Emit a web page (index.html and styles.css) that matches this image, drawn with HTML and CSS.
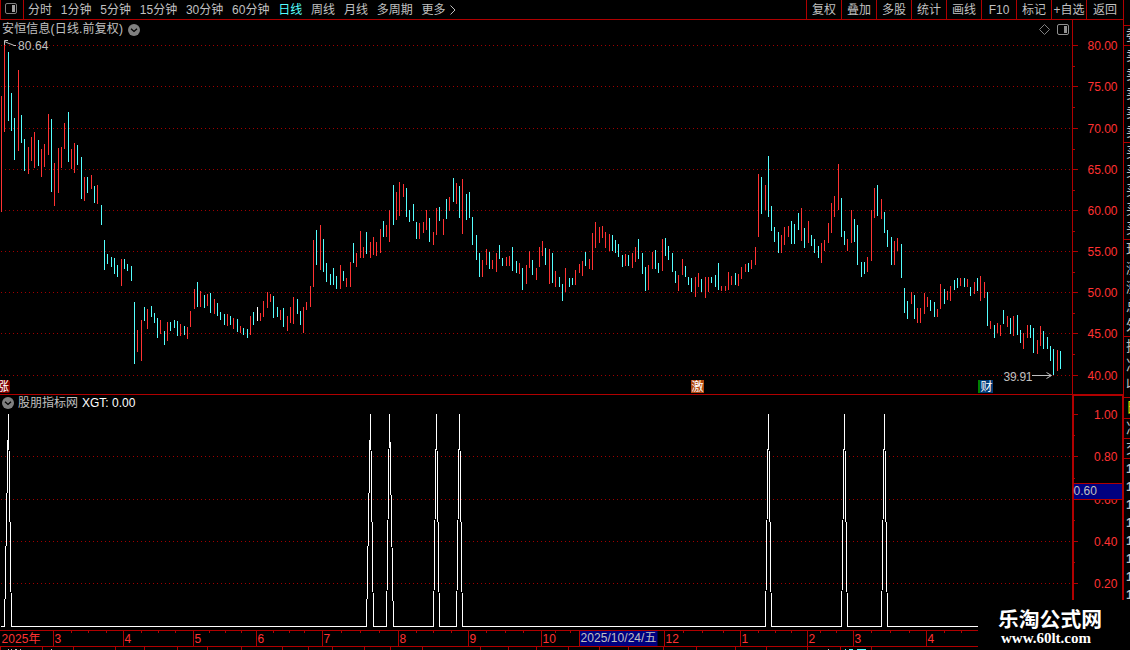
FILE: index.html
```html
<!DOCTYPE html>
<html lang="zh-CN">
<head>
    <meta charset="UTF-8">
    <title>安恒信息 日线</title>
    <link rel="stylesheet" href="styles.css">
</head>
<body>
    <div class="main">
        <div class="toolbar">
            <div class="panel-toggle">
                <svg width="12" height="11" viewBox="0 0 12 11">
                    <rect x="0.5" y="0.5" width="11" height="10" rx="1.5" fill="none" stroke="#808080"/>
                    <rect x="7" y="2" width="3" height="7" fill="#a0a0a0"/>
                </svg>
            </div>
            <div class="periods">
                <span>分时</span>
                <span>1分钟</span>
                <span>5分钟</span>
                <span>15分钟</span>
                <span>30分钟</span>
                <span>60分钟</span>
                <span class="active">日线</span>
                <span>周线</span>
                <span>月线</span>
                <span>多周期</span>
                <span class="more">更多
                    <svg width="6" height="10" viewBox="0 0 6 10"><path d="M0.5 0.5L5 5L0.5 9.5" fill="none" stroke="#c0c0c0"/></svg>
                </span>
            </div>
            <div class="actions">
                <span>复权</span>
                <span>叠加</span>
                <span>多股</span>
                <span>统计</span>
                <span>画线</span>
                <span>F10</span>
                <span>标记</span>
                <span>+自选</span>
                <span class="last">返回</span>
            </div>
        </div>

        <div class="price-panel">
            <div class="price-title">
                <span>安恒信息(日线.前复权)</span>
                <svg width="12" height="12" viewBox="0 0 12 12"><circle cx="6" cy="6" r="6" fill="#808080"/><path d="M3 4.8L6 7.5L9 4.8" fill="none" stroke="#000" stroke-width="1.3"/></svg>
            </div>
            <div class="price-tools">
                <svg width="11" height="11" viewBox="0 0 11 11"><path d="M5.5 0.5L10.5 5.5L5.5 10.5L0.5 5.5Z" fill="none" stroke="#808080"/></svg>
                <svg width="12" height="11" viewBox="0 0 12 11">
                    <rect x="0.5" y="0.5" width="11" height="10" rx="1.5" fill="none" stroke="#909090"/>
                    <rect x="7" y="2" width="3" height="7" fill="#909090"/>
                </svg>
            </div>
            <svg class="plot" width="1123" height="374" viewBox="0 20 1123 374">
                <!-- grid -->
                <path class="grid" d="M1 45.5H1072M1 86.5H1072M1 128.5H1072M1 169.5H1072M1 210.5H1072M1 251.5H1072M1 292.5H1072M1 333.5H1072M1 375.5H1072"/>
                <!-- axis -->
                <path class="axis" d="M1072.5 20V394M1073 45.5H1078M1073 86.5H1078M1073 128.5H1078M1073 169.5H1078M1073 210.5H1078M1073 251.5H1078M1073 292.5H1078M1073 333.5H1078M1073 375.5H1078M1073 66.5H1075M1073 107.5H1075M1073 149.5H1075M1073 190.5H1075M1073 231.5H1075M1073 272.5H1075M1073 313.5H1075M1073 354.5H1075"/>
                <g class="label">
                    <text x="1087.5" y="50" textLength="30">80.00</text>
                    <text x="1087.5" y="91" textLength="30">75.00</text>
                    <text x="1087.5" y="133" textLength="30">70.00</text>
                    <text x="1087.5" y="174" textLength="30">65.00</text>
                    <text x="1087.5" y="215" textLength="30">60.00</text>
                    <text x="1087.5" y="256" textLength="30">55.00</text>
                    <text x="1087.5" y="297" textLength="30">50.00</text>
                    <text x="1087.5" y="338" textLength="30">45.00</text>
                    <text x="1087.5" y="380" textLength="30">40.00</text>
                </g>
                <!-- high/low bars -->
                <g class="bars" transform="translate(0.5 0)">
                    <path class="up" d="M1 96V212M4 43V132M18 70V151M28 147V174M31 137V161M34 132V168M41 149V177M44 144V167M48 114V155M54 163V206M58 148V193M61 147V168M64 123V149M71 149V169M74 143V173M84 177V201M91 175V189M97 185V204
                        M121 259V286M137 330V352M141 320V361M147 309V329M160 320V334M167 322V341M180 324V336M187 327V339M190 311V327M194 289V309M200 291V307M207 294V306M214 299V314M227 314V326M233 318V329M240 326V333M250 316V335M260 313V321M263 301V317M267 292V308M270 294V302M280 310V320M287 316V331M290 307V323M293 297V324
                        M303 307V333M306 302V310M310 286V307M313 240V287M320 225V270M340 265V289M346 278V287M350 262V287M356 253V267M360 231V258M363 247V258M370 242V258M373 237V255M376 242V256M380 229V253M386 225V237M389 210V242M396 192V220M399 182V216
                        M403 184V197M419 223V239M423 222V233M426 210V230M433 232V245M436 208V235M443 219V235M449 197V211M456 183V204M462 179V234M482 260V277M486 249V265M492 260V269M496 253V272
                        M506 257V266M509 256V266M519 263V274M526 265V284M529 251V268M536 268V280M539 247V267M542 241V256M549 249V284M555 271V287M565 268V292M575 270V285M579 264V273M582 261V276M589 259V269M592 233V270M595 222V248M599 227V243
                        M602 226V238M605 232V248M609 234V251M625 254V266M632 253V268M635 247V262M648 265V290M652 252V269M662 239V271M678 275V291M682 259V275M695 277V297M698 273V287
                        M705 277V298M708 277V292M721 286V291M725 286V291M728 272V290M731 276V285M738 274V286M741 267V279M745 264V272M751 260V269M755 247V265M758 174V237M765 185V210M781 235V253M784 227V245M788 226V237
                        M801 208V241M808 221V243M821 243V263M824 240V251M828 223V243M831 203V233M834 196V217M838 164V210M847 239V251M851 210V243M867 257V272M871 210V261M874 188V218M881 199V219M894 241V265M897 238V251
                        M911 292V304M917 308V323M920 308V323M924 293V314M927 297V307M937 309V317M940 284V309M947 291V300M950 286V301M960 278V286M967 279V287M974 282V294M980 276V301M984 282V298M990 321V329M997 323V333
                        M1000 325V336M1007 316V327M1013 316V336M1023 333V349M1027 325V338M1037 340V354M1040 326V346M1057 350V371"/>
                    <path class="down" d="M8 52V121M11 93V131M14 118V160M21 115V143M24 139V171M38 140V166M51 119V192M68 112V162M77 145V165M81 157V199M87 177V193M94 186V203
                        M101 205V225M104 240V270M107 254V264M111 257V267M114 258V274M117 265V277M124 259V269M127 264V271M131 266V281M134 302V364M144 307V321M151 306V317M154 313V323M157 318V338M164 331V345M170 322V331M174 320V328M177 321V336M184 326V335M197 282V307
                        M204 295V308M210 293V313M217 303V316M220 312V320M224 314V325M230 316V325M237 319V332M243 328V335M247 329V338M253 312V325M273 296V318M277 307V317M283 308V327M297 299V314
                        M300 311V325M316 230V265M323 239V272M326 263V282M330 274V285M333 268V285M336 276V289M343 271V281M353 243V263M366 232V254M383 221V237M393 185V225
                        M406 188V217M409 210V222M413 204V221M416 222V239M429 218V242M439 207V221M446 199V219M453 178V202M459 186V218M466 194V220M469 192V218M472 217V245M476 235V260M479 253V277M489 252V269M499 245V259
                        M502 258V266M512 247V271M516 261V273M522 268V290M532 260V275M545 248V265M552 253V283M559 277V287M562 284V301M569 278V287M572 278V285M585 252V266
                        M612 235V251M615 240V253M618 244V257M622 255V267M628 255V266M638 239V259M642 253V274M645 267V291M655 250V269M658 263V273M665 238V256M668 246V260M672 253V272M675 271V283M685 266V277M688 277V285M691 278V292
                        M701 279V292M711 277V283M715 275V287M718 263V290M735 273V285M748 263V272M761 177V214M768 156V217M771 206V231M774 227V242M778 232V253M791 221V244M794 224V244M798 213V230
                        M804 228V248M811 235V246M814 239V253M818 246V258M841 198V237M844 231V245M854 219V242M857 225V265M861 262V277M864 262V274M877 185V216M884 212V233M887 230V247M891 237V265
                        M901 244V278M904 288V313M907 301V319M914 295V319M930 300V311M934 302V317M944 289V304M954 280V290M957 278V288M964 278V287M970 287V296M977 278V291M987 292V326M994 325V338
                        M1003 310V324M1010 318V334M1017 315V335M1020 330V343M1030 325V338M1033 328V353M1043 331V349M1047 337V349M1050 346V361M1053 349V375M1060 351V369"/>
                    <path class="flat" d="M257 307V321"/>
                </g>
                <!-- highest and lowest marks -->
                <path class="pointer" d="M16 45.5H14L12 44.5L9 43.5L4.5 41.5M4.5 45V40.5H8M1032 375.5H1051M1046.5 372.5L1051.5 375.5L1046.5 378.5"/>
                <g class="mark">
                    <text x="18" y="50" textLength="30.5">80.64</text>
                    <text x="1003.5" y="381" textLength="29">39.91</text>
                </g>
            </svg>
            <span class="badge rise">涨</span>
            <span class="badge incentive">激</span>
            <span class="badge report">财</span>
        </div>

        <div class="indicator-panel">
            <div class="indicator-title">
                <svg width="12" height="12" viewBox="0 0 12 12"><circle cx="6" cy="6" r="6" fill="#808080"/><path d="M3 4.8L6 7.5L9 4.8" fill="none" stroke="#000" stroke-width="1.3"/></svg>
                <span>股朋指标网</span>
                <span class="value">XGT: 0.00</span>
            </div>
            <svg class="plot" width="1124" height="235" viewBox="0 395 1124 235">
                <path class="grid" d="M1 456.5H1072M1 499.5H1072M1 541.5H1072M1 583.5H1072"/>
                <path class="axis" d="M1074 414.5H1078M1074 456.5H1078M1074 499.5H1078M1074 541.5H1078M1074 583.5H1078M1074 435.5H1075M1074 478.5H1075M1074 520.5H1075M1074 562.5H1075"/>
                <path class="frame" d="M1073 630V395H1123V630"/>
                <polyline class="signal" points="1,626.5 4.5,626.5 8.5,414 11.5,626.5 366.5,626.5 370.5,414 373.5,626.5 386.5,626.5 389.5,414 393.5,626.5 433.5,626.5 436.5,414 439.5,626.5 456.5,626.5 459.5,414 462.5,626.5 765.5,626.5 768.5,414 771.5,626.5 841.5,626.5 844.5,414 847.5,626.5 881.5,626.5 884.5,414 887.5,626.5 978,626.5"/>
                <g class="label">
                    <text x="1094" y="419" textLength="23.5">1.00</text>
                    <text x="1094" y="461" textLength="23.5">0.80</text>
                    <text x="1094" y="504" textLength="23.5">0.60</text>
                    <text x="1094" y="546" textLength="23.5">0.40</text>
                    <text x="1094" y="588" textLength="23.5">0.20</text>
                </g>
                <rect x="1074" y="483" width="48" height="17" fill="#000080"/>
                <path class="axis" d="M1074 483.5H1122M1074 499.5H1122"/>
                <text class="cursor" x="1073.5" y="495" textLength="23.5">0.60</text>
            </svg>
        </div>

        <svg class="timeline" width="1123" height="20" viewBox="0 630 1123 20">
            <path class="axis" d="M0 630.5H1123M0 646.5H1123M53.5 630V646M123.5 630V646M193.5 630V646M256.5 630V646M322.5 630V646M398.5 630V646M468.5 630V646M541.5 630V646M664.5 630V646M740.5 630V646M807.5 630V646M853.5 630V646M926.5 630V646"/>
            <path class="axis" d="M71.5 631V633M88.5 631V633M106.5 631V633M141.5 631V633M158.5 631V633M175.5 631V633M209.5 631V633M225.5 631V633M241.5 631V633M273.5 631V633M289.5 631V633M304.5 631V633M341.5 631V633M360.5 631V633M379.5 631V633M416.5 631V633M433.5 631V633M451.5 631V633M486.5 631V633M505.5 631V633M523.5 631V633M555.5 631V633M570.5 631V633M683.5 631V633M702.5 631V633M723.5 631V633M758.5 631V633M775.5 631V633M791.5 631V633M820.5 631V633M836.5 631V633M871.5 631V633M890.5 631V633M909.5 631V633M944.5 631V633M961.5 631V633"/>
            <path class="axis" d="M0.5 647V650M42.5 647V650M73.5 647V650M115.5 647V650M144.5 647V650M177.5 647V650M207.5 647V650M241.5 647V650M282.5 647V650M308.5 647V650M332.5 647V650M364.5 647V650M390.5 647V650M422.5 647V650M480.5 647V650M508.5 647V650M536.5 647V650M568.5 647V650M599.5 647V650M628.5 647V650M663.5 647V650M696.5 647V650M735.5 647V650M766.5 647V650M807.5 647V650M840.5 647V650M871.5 647V650"/>
            <path d="M8 649.5H9M11 649.5H12M15 649.5H17M20 649.5H21M51 649.5H52M828 649.5H829" stroke="#c0c0c0"/>
            <path d="M845 649.5H846M849 649.5H853M857 649.5H866" stroke="#54ffff"/>
            <g class="label">
                <text x="1.5" y="643" textLength="39">2025年</text>
                <text x="54.5" y="643">3</text>
                <text x="124.5" y="643">4</text>
                <text x="194.5" y="643">5</text>
                <text x="257.5" y="643">6</text>
                <text x="323.5" y="643">7</text>
                <text x="399.5" y="643">8</text>
                <text x="469.5" y="643">9</text>
                <text x="542.5" y="643">10</text>
                <text x="665.5" y="643">12</text>
                <text x="741.5" y="643">1</text>
                <text x="808.5" y="643">2</text>
                <text x="854.5" y="643">3</text>
                <text x="927.5" y="643">4</text>
            </g>
            <rect x="579.5" y="631" width="78" height="15" fill="#000080" stroke="none"/>
            <path class="axis" d="M579.5 631V646"/>
            <text class="cursor" x="580.5" y="642" textLength="76">2025/10/24/五</text>
        </svg>
    </div>

    <div class="side">
        <div class="side-head"></div>
        <div class="side-tab">委</div>
        <div class="side-block">卖卖卖卖卖</div>
        <div class="side-block">买买买买买</div>
        <div class="side-block">现涨涨总外</div>
        <div class="side-block short">换净收</div>
        <div class="side-tab yellow">日</div>
        <div class="side-tab">净</div>
        <div class="side-tab">交</div>
        <div class="side-times">
            <span>1</span><span>1</span><span>1</span><span>1</span><span>1</span><span>1</span><span>1</span><span>1</span>
        </div>
    </div>

    <div class="watermark">
        <div class="site-name">乐淘公式网</div>
        <div class="site-url">www.60lt.com</div>
    </div>
</body>
</html>
```
FILE: styles.css
```css
* {
    box-sizing: border-box;
}
body {
    margin: 0;
    width: 1130px;
    height: 650px;
    overflow: hidden;
    display: flex;
    position: relative;
    background: #000;
    color: #c0c0c0;
    font-family: "Liberation Sans", "Noto Sans CJK SC", sans-serif;
    font-size: 12px;
    line-height: 18px;
}
svg {
    display: block;
    flex: none;
}
.main {
    width: 1123px;
    flex: none;
    display: flex;
    flex-direction: column;
}

/* toolbar */
.toolbar {
    display: flex;
    height: 20px;
    flex: none;
    border-bottom: 1px solid #b00000;
    line-height: 20px;
    white-space: nowrap;
}
.panel-toggle {
    width: 24px;
    padding: 3px 0 0 4px;
    border-left: 1px solid #b00000;
    border-right: 1px solid #b00000;
}
.periods {
    display: flex;
    gap: 8.8px;
    padding-left: 4px;
    flex: 1;
}
.periods .active {
    color: #54ffff;
}
.more {
    display: flex;
    align-items: center;
    height: 19px;
    gap: 4px;
}
.actions {
    display: flex;
}
.actions span {
    width: 35px;
    height: 19px;
    border-left: 1px solid #b00000;
    text-align: center;
}
.actions .last {
    width: 37px;
}

/* price chart */
.price-panel {
    position: relative;
    height: 375px;
    flex: none;
    border-bottom: 1px solid #b00000;
    overflow: hidden;
}
.price-title {
    position: absolute;
    left: 2px;
    top: 0;
    display: flex;
    align-items: center;
    gap: 5px;
    line-height: 19px;
    letter-spacing: 0.15px;
}
.price-tools {
    position: absolute;
    left: 1039px;
    top: 4px;
    display: flex;
    gap: 7px;
}
.grid {
    fill: none;
    stroke: #a00000;
    stroke-dasharray: 1 3;
    shape-rendering: crispEdges;
}
.axis {
    fill: none;
    stroke: #b00000;
    shape-rendering: crispEdges;
}
.label {
    fill: #ff3232;
}
.mark, .cursor {
    fill: #c0c0c0;
}
.bars {
    shape-rendering: crispEdges;
}
.up {
    stroke: #ff3232;
}
.down {
    stroke: #54ffff;
}
.flat {
    stroke: #fff;
}
.pointer {
    fill: none;
    stroke: #c0c0c0;
}
.badge {
    position: absolute;
    top: 360px;
    width: 13px;
    height: 13px;
    line-height: 14px;
    text-align: center;
    color: #fff;
}
.rise {
    left: -4px;
    width: 14px;
    background: #800000;
    border-radius: 0 2px 2px 0;
}
.incentive {
    left: 691px;
    background: #b04810;
}
.report {
    left: 978px;
    width: 15px;
    background: #003c78;
    border-left: 2px solid #008000;
}

/* indicator */
.indicator-panel {
    position: relative;
    height: 235px;
    flex: none;
}
.indicator-title {
    position: absolute;
    left: 2px;
    top: -1px;
    display: flex;
    align-items: center;
    gap: 4px;
}
.value {
    color: #fff;
}
.frame {
    fill: none;
    stroke: #b00000;
    stroke-width: 2;
    shape-rendering: crispEdges;
}
.signal {
    fill: none;
    stroke: #fff;
    stroke-linejoin: bevel;
    shape-rendering: crispEdges;
}

/* quote column, cut by the window edge */
.side {
    width: 7px;
    height: 650px;
    overflow: hidden;
    border-left: 1px solid #b00000;
}
.side-head {
    height: 26px;
    border-bottom: 1px solid #b00000;
}
.side-block {
    height: 97px;
    padding-left: 2px;
    width: 16px;
    font-size: 14px;
    line-height: 19px;
    border-bottom: 1px solid #b00000;
    word-break: break-all;
}
.side-block.short {
    height: 61px;
}
.side-tab {
    width: 16px;
    height: 20px;
    padding-left: 2px;
    font-size: 14px;
    line-height: 19px;
    border-bottom: 1px solid #b00000;
}
.yellow {
    height: 21px;
    color: #e0e000;
}
.side-times {
    padding: 1px 0 0 2px;
}
.side-times span {
    display: block;
    font-size: 13px;
    font-weight: bold;
}

.watermark {
    position: absolute;
    left: 978px;
    top: 600px;
    width: 152px;
    height: 50px;
    padding: 6px 0 0 20px;
    background: #000;
    color: #fff;
    font-weight: bold;
}
.site-name {
    font-family: "Noto Sans CJK SC", sans-serif;
    font-size: 20.8px;
    line-height: 24px;
}
.site-url {
    padding-left: 3px;
    font-family: "Liberation Serif", serif;
    font-size: 15px;
    line-height: 17px;
}
```
